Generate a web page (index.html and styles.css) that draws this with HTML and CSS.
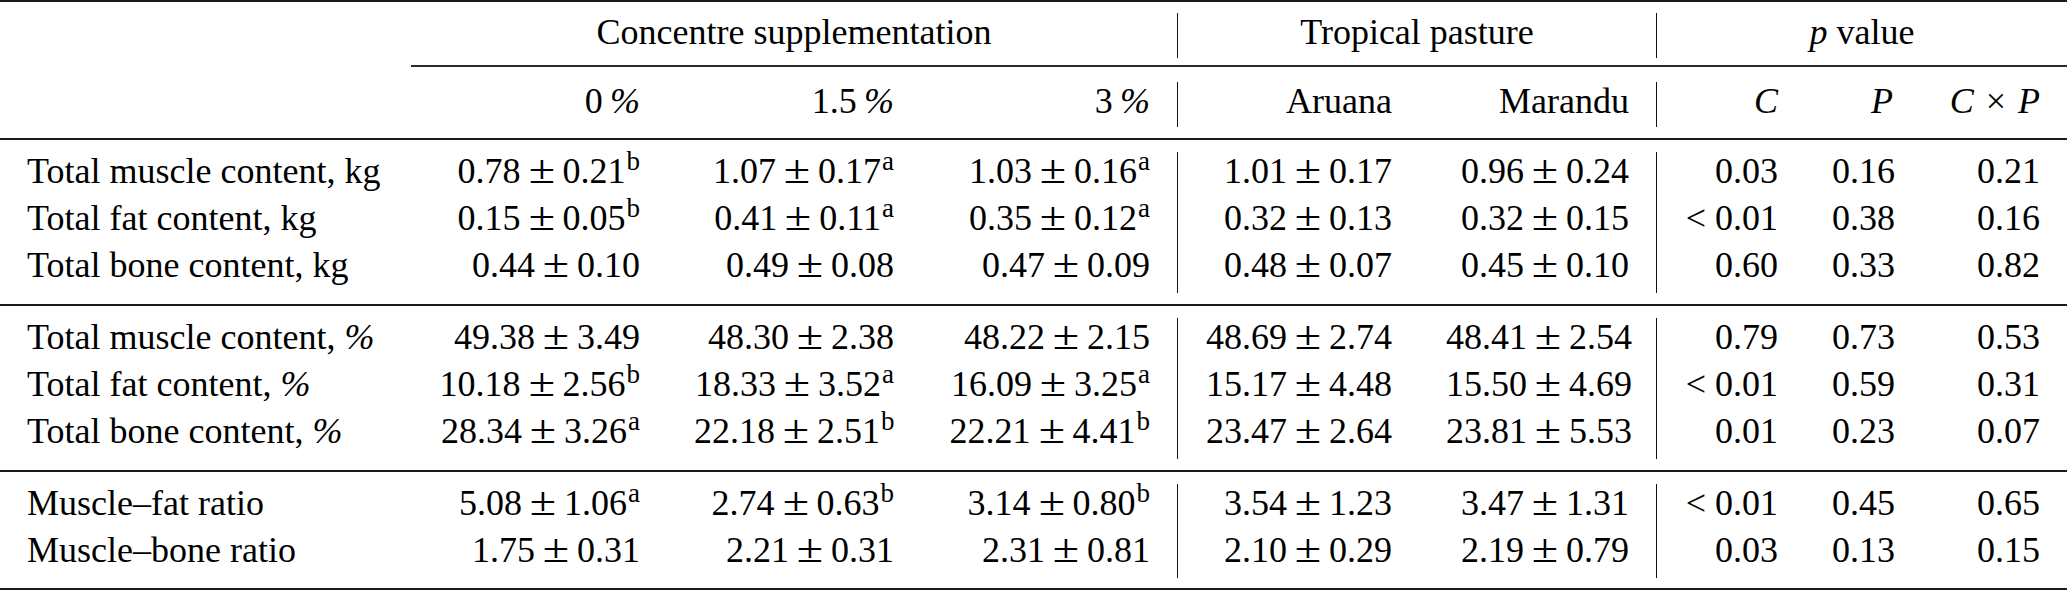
FILE: index.html
```html
<!DOCTYPE html>
<html>
<head>
<meta charset="utf-8">
<link rel="stylesheet" href="styles.css">
</head>
<body>
<div class="tbl">
  <div class="rule heavy"></div>
  <div class="sec head1">
    <div class="c lab"></div>
    <div class="c grp g1">Concentre supplementation</div>
    <div class="c grp g2">Tropical pasture</div>
    <div class="c grp g3"><i>p</i> value</div>
  </div>
  <div class="cmid"></div>
  <div class="sec head2">
    <div class="c lab"></div>
    <div class="c">0&#8201;<i>%</i></div>
    <div class="c">1.5&#8201;<i>%</i></div>
    <div class="c">3&#8201;<i>%</i></div>
    <div class="c">Aruana</div>
    <div class="c">Marandu</div>
    <div class="c"><i>C</i></div>
    <div class="c"><i>P</i></div>
    <div class="c"><i>C</i><span class="x">×</span><i>P</i></div>
  </div>
  <div class="rule"></div>
  <div class="sec body">
    <div class="c lab">Total muscle content, kg</div>
    <div class="c">0.78<span class="pm">±</span>0.21<sup>b</sup></div>
    <div class="c">1.07<span class="pm">±</span>0.17<sup>a</sup></div>
    <div class="c">1.03<span class="pm">±</span>0.16<sup>a</sup></div>
    <div class="c">1.01<span class="pm">±</span>0.17</div>
    <div class="c">0.96<span class="pm">±</span>0.24</div>
    <div class="c">0.03</div>
    <div class="c">0.16</div>
    <div class="c">0.21</div>

    <div class="c lab">Total fat content, kg</div>
    <div class="c">0.15<span class="pm">±</span>0.05<sup>b</sup></div>
    <div class="c">0.41<span class="pm">±</span>0.11<sup>a</sup></div>
    <div class="c">0.35<span class="pm">±</span>0.12<sup>a</sup></div>
    <div class="c">0.32<span class="pm">±</span>0.13</div>
    <div class="c">0.32<span class="pm">±</span>0.15</div>
    <div class="c"><span class="lt">&lt;</span>0.01</div>
    <div class="c">0.38</div>
    <div class="c">0.16</div>

    <div class="c lab">Total bone content, kg</div>
    <div class="c">0.44<span class="pm">±</span>0.10</div>
    <div class="c">0.49<span class="pm">±</span>0.08</div>
    <div class="c">0.47<span class="pm">±</span>0.09</div>
    <div class="c">0.48<span class="pm">±</span>0.07</div>
    <div class="c">0.45<span class="pm">±</span>0.10</div>
    <div class="c">0.60</div>
    <div class="c">0.33</div>
    <div class="c">0.82</div>
  </div>
  <div class="rule"></div>
  <div class="sec body">
    <div class="c lab">Total muscle content, <i>%</i></div>
    <div class="c">49.38<span class="pm">±</span>3.49</div>
    <div class="c">48.30<span class="pm">±</span>2.38</div>
    <div class="c">48.22<span class="pm">±</span>2.15</div>
    <div class="c">48.69<span class="pm">±</span>2.74</div>
    <div class="c">48.41<span class="pm">±</span>2.54</div>
    <div class="c">0.79</div>
    <div class="c">0.73</div>
    <div class="c">0.53</div>

    <div class="c lab">Total fat content, <i>%</i></div>
    <div class="c">10.18<span class="pm">±</span>2.56<sup>b</sup></div>
    <div class="c">18.33<span class="pm">±</span>3.52<sup>a</sup></div>
    <div class="c">16.09<span class="pm">±</span>3.25<sup>a</sup></div>
    <div class="c">15.17<span class="pm">±</span>4.48</div>
    <div class="c">15.50<span class="pm">±</span>4.69</div>
    <div class="c"><span class="lt">&lt;</span>0.01</div>
    <div class="c">0.59</div>
    <div class="c">0.31</div>

    <div class="c lab">Total bone content, <i>%</i></div>
    <div class="c">28.34<span class="pm">±</span>3.26<sup>a</sup></div>
    <div class="c">22.18<span class="pm">±</span>2.51<sup>b</sup></div>
    <div class="c">22.21<span class="pm">±</span>4.41<sup>b</sup></div>
    <div class="c">23.47<span class="pm">±</span>2.64</div>
    <div class="c">23.81<span class="pm">±</span>5.53</div>
    <div class="c">0.01</div>
    <div class="c">0.23</div>
    <div class="c">0.07</div>
  </div>
  <div class="rule"></div>
  <div class="sec body last">
    <div class="c lab">Muscle–fat ratio</div>
    <div class="c">5.08<span class="pm">±</span>1.06<sup>a</sup></div>
    <div class="c">2.74<span class="pm">±</span>0.63<sup>b</sup></div>
    <div class="c">3.14<span class="pm">±</span>0.80<sup>b</sup></div>
    <div class="c">3.54<span class="pm">±</span>1.23</div>
    <div class="c">3.47<span class="pm">±</span>1.31</div>
    <div class="c"><span class="lt">&lt;</span>0.01</div>
    <div class="c">0.45</div>
    <div class="c">0.65</div>

    <div class="c lab">Muscle–bone ratio</div>
    <div class="c">1.75<span class="pm">±</span>0.31</div>
    <div class="c">2.21<span class="pm">±</span>0.31</div>
    <div class="c">2.31<span class="pm">±</span>0.81</div>
    <div class="c">2.10<span class="pm">±</span>0.29</div>
    <div class="c">2.19<span class="pm">±</span>0.79</div>
    <div class="c">0.03</div>
    <div class="c">0.13</div>
    <div class="c">0.15</div>
  </div>
  <div class="rule heavy"></div>
</div>
</body>
</html>
```
FILE: styles.css
```css
html, body {
  margin: 0;
  padding: 0;
  background: #ffffff;
}

body {
  width: 2067px;
  height: 591px;
  overflow: hidden;
}

.tbl {
  display: flex;
  flex-direction: column;
  width: 2067px;
  font-family: "Liberation Serif", "Times New Roman", serif;
  font-size: 36px;
  color: #000000;
}

.rule {
  height: 2px;
  background: #1a1a1a;
}

.cmid {
  height: 2px;
  margin-left: 411px;
  background: #2a2a2a;
}

.sec {
  display: grid;
  grid-template-columns: 411px 256px 254px 257px 241px 238px 148px 115px 147px;
}

.c {
  box-sizing: border-box;
  line-height: 38px;
  height: 47px;
  padding: 0 27px 9px;
  text-align: right;
  white-space: nowrap;
}

.c.lab {
  text-align: left;
}

.head1 {
  padding: 11px 0 7px;
}

.head1 .c {
  height: 45px;
  padding-bottom: 7px;
}

.grp {
  text-align: center;
  padding-left: 0;
  padding-right: 0;
}

.g1 {
  grid-column: span 3;
  border-right: 1px solid #111;
}

.g2 {
  grid-column: span 2;
  border-right: 1px solid #111;
}

.g3 {
  grid-column: span 3;
}

.head2 {
  padding: 15px 0 11px;
}

.head2 .c {
  height: 45px;
  padding-bottom: 7px;
}

.head2 .c:nth-child(4),
.head2 .c:nth-child(6),
.body .c:nth-child(9n+4),
.body .c:nth-child(9n+6) {
  border-right: 1px solid #111;
}

.body {
  padding: 12px 0 11px;
}

.body.last {
  padding: 12px 0 10px;
}

.pm {
  display: inline-block;
  width: 42px;
  text-align: center;
  font-size: 40px;
  line-height: 30px;
  transform: scaleX(1.2);
}

.x {
  margin: 0 12px;
}

.lt {
  margin-right: 9px;
}

sup {
  font-size: 27px;
  line-height: 0;
  vertical-align: 13px;
  margin-left: 1px;
}

i {
  font-style: italic;
}
```
